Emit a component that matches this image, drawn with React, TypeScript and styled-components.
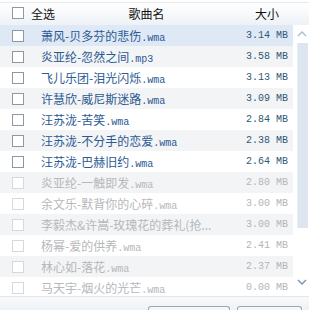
import styled, { createGlobalStyle } from 'styled-components'

interface Song {
    name: string
    size: string
    disabled?: boolean
}

const songs: Song[] = [
    { name: '萧风-贝多芬的悲伤.wma', size: '3.14 MB' },
    { name: '炎亚纶-忽然之间.mp3', size: '3.58 MB' },
    { name: '飞儿乐团-泪光闪烁.wma', size: '3.13 MB' },
    { name: '许慧欣-威尼斯迷路.wma', size: '3.09 MB' },
    { name: '汪苏泷-苦笑.wma', size: '2.84 MB' },
    { name: '汪苏泷-不分手的恋爱.wma', size: '2.38 MB' },
    { name: '汪苏泷-巴赫旧约.wma', size: '2.64 MB' },
    { name: '炎亚纶-一触即发.wma', size: '2.80 MB', disabled: true },
    { name: '余文乐-默背你的心碎.wma', size: '3.00 MB', disabled: true },
    { name: '李毅杰&许嵩-玫瑰花的葬礼(抢...', size: '3.00 MB', disabled: true },
    { name: '杨幂-爱的供养.wma', size: '2.41 MB', disabled: true },
    { name: '林心如-落花.wma', size: '2.37 MB', disabled: true },
    { name: '马天宇-烟火的光芒.wma', size: '0.00 MB', disabled: true },
]

// split "歌名.wma" so the latin bits can use a narrow mono face like the original
const splitName = (name: string) => {
    const dot = name.lastIndexOf('.')
    if (dot < 0 || name.endsWith('...')) return [name, '']
    return [name.slice(0, dot), name.slice(dot)]
}

const GlobalStyle = createGlobalStyle`
    body {
        margin: 0;
        background: #fff;
        overflow: hidden;
        font-family: "Noto Sans CJK SC", "Liberation Sans", sans-serif;
    }
`

const App = () => {
    return (
        <Panel>
            <GlobalStyle />
            <Header>
                <HeaderCheck>
                    <Box />
                    <span>全选</span>
                </HeaderCheck>
                <HeaderTitle>歌曲名</HeaderTitle>
                <HeaderSize>大小</HeaderSize>
            </Header>
            <Body>
                <List>
                    {songs.map((song, i) => {
                        const [title, ext] = splitName(song.name)
                        return (
                            <Row key={song.name} $index={i}>
                                <CheckCell>
                                    <Box $disabled={song.disabled} />
                                </CheckCell>
                                <Name $disabled={song.disabled}>
                                    {title}
                                    {ext && <Ext>{ext}</Ext>}
                                </Name>
                                <Size $disabled={song.disabled}>{song.size}</Size>
                            </Row>
                        )
                    })}
                </List>
                <Scrollbar>
                    <Arrow>
                        <svg width="10" height="6" viewBox="0 0 10 6">
                            <path d="M1 5 L5 1 L9 5" fill="none" stroke="#a9bccd" strokeWidth="1.3" />
                        </svg>
                    </Arrow>
                    <Track>
                        <Thumb />
                    </Track>
                    <Arrow $bottom>
                        <svg width="10" height="6" viewBox="0 0 10 6">
                            <path d="M1 1 L5 5 L9 1" fill="none" stroke="#6f93b8" strokeWidth="1.3" />
                        </svg>
                    </Arrow>
                </Scrollbar>
            </Body>
            <Footer>
                <FooterButton $width={80} />
                <FooterButton $width={63} />
            </Footer>
        </Panel>
    )
}

const Panel = styled.div`
    width: 309px;
    height: 310px;
    display: flex;
    flex-direction: column;
    overflow: hidden;
    background: #fff;
`

const Header = styled.div`
    height: 22px;
    margin-top: 2px;
    flex-shrink: 0;
    display: grid;
    grid-template-columns: 60px 1fr 60px 16px;
    align-items: center;
    border-top: 1px solid #e6e9ed;
    background: linear-gradient(#ffffff, #eef2f6);
    font-size: 12px;
    color: #111;
`

const HeaderCheck = styled.div`
    display: flex;
    align-items: center;
    gap: 7px;
    padding-left: 12px;
    margin-top: -2px;
`

const HeaderTitle = styled.div`
    text-align: center;
    margin-top: -2px;
`

const HeaderSize = styled.div`
    text-align: center;
    padding-left: 8px;
    margin-top: -2px;
`

const Body = styled.div`
    flex: 1;
    display: flex;
    min-height: 0;
`

const List = styled.div`
    flex: 1;
    overflow: hidden;
`

const Row = styled.div<{ $index: number }>`
    height: 21px;
    display: grid;
    grid-template-columns: 41px 1fr 60px;
    align-items: center;
    background: ${({ $index }) =>
        $index === 0 ? '#dfe9f5' : $index % 2 === 1 ? '#f3f4f5' : '#ffffff'};
`

const CheckCell = styled.div`
    padding-left: 12px;
    display: flex;
`

const Box = styled.div<{ $disabled?: boolean }>`
    width: 10px;
    height: 10px;
    background: #fff;
    border: 1px solid ${({ $disabled }) => ($disabled ? '#d6d9dc' : '#8d98a3')};
`

const Name = styled.div<{ $disabled?: boolean }>`
    font-size: 12px;
    white-space: nowrap;
    overflow: hidden;
    color: ${({ $disabled }) => ($disabled ? '#b6b8ba' : '#2a5a92')};
`

const Ext = styled.span`
    font-family: "Liberation Mono", monospace;
    font-size: 10px;
`

const Size = styled.div<{ $disabled?: boolean }>`
    font-family: "Liberation Mono", monospace;
    font-size: 10px;
    text-align: right;
    padding-right: 5px;
    color: ${({ $disabled }) => ($disabled ? '#b4b6b8' : '#2f5876')};
`

const Scrollbar = styled.div`
    width: 16px;
    display: flex;
    flex-direction: column;
    align-items: center;
    background: #fff;
`

const Arrow = styled.div<{ $bottom?: boolean }>`
    height: 18px;
    width: 100%;
    display: flex;
    align-items: center;
    justify-content: center;
    padding-left: 2px;
    margin-bottom: ${({ $bottom }) => ($bottom ? '5px' : '0')};
    box-sizing: border-box;
`

const Track = styled.div`
    flex: 1;
    width: 100%;
    display: flex;
    justify-content: center;
    padding-left: 2px;
    box-sizing: border-box;
`

const Thumb = styled.div`
    width: 10px;
    height: 185px;
    background: #dde6ef;
    border-left: 1px solid #e8eef4;
`

const Footer = styled.div`
    height: 13px;
    flex-shrink: 0;
    display: flex;
    justify-content: flex-end;
    align-items: flex-end;
    gap: 7px;
    padding-right: 7px;
    background: linear-gradient(#f9fafb, #eef1f4);
    border-top: 1px solid #e3e7eb;
`

const FooterButton = styled.div<{ $width: number }>`
    width: ${({ $width }) => $width}px;
    height: 3px;
    border: 1px solid #9ba6b1;
    border-bottom: none;
    border-radius: 3px 3px 0 0;
    background: #f7f7f7;
`

export default App
